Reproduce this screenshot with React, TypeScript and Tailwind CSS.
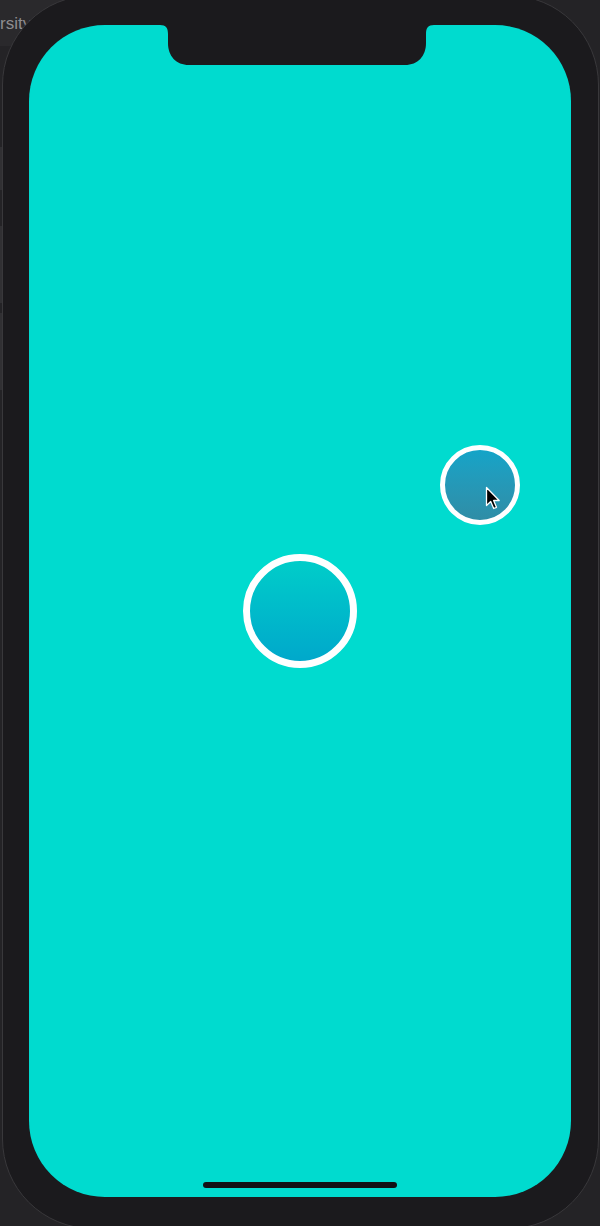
export default function App() {
  return (
    <div className="relative h-[1226px] w-[600px] overflow-hidden bg-[#242326] font-['Liberation_Sans',sans-serif]">
      {/* window behind the device */}
      <div className="absolute left-0 top-0 h-[46px] w-[120px] bg-[#2a292c]">
        <span className="absolute left-0 top-[15px] text-[17px] leading-none text-[#8e8d90]">rsity</span>
      </div>
      <div className="absolute left-0 top-[147px] h-[43px] w-[2px] bg-[#313033]" />
      <div className="absolute left-0 top-[226px] h-[77px] w-[2px] bg-[#313033]" />
      <div className="absolute left-0 top-[313px] h-[77px] w-[2px] bg-[#313033]" />

      {/* device frame */}
      <div className="relative ml-[2px] mr-[1px] -mt-[5px] h-[1234px] rounded-[90px] border border-[#39383b] bg-[#1b1a1d] pl-[26px] pr-[27px] pt-[29px]">
        <div className="relative flex h-[1172px] flex-col items-center justify-end rounded-[76px] bg-[#00dbcf] pb-[9px]">
          {/* notch */}
          <svg
            className="absolute left-[131px] top-0"
            width="274"
            height="40"
            viewBox="0 0 274 40"
          >
            <path
              d="M0 0 H274 C268 0 266 3 266 9 V18 C266 31 258 40 245 40 H29 C16 40 8 31 8 18 V9 C8 3 6 0 0 0 Z"
              fill="#1b1a1d"
            />
          </svg>

          {/* big bubble */}
          <div className="absolute left-[214px] top-[529px] h-[114px] w-[114px] rounded-full border-[7px] border-white bg-gradient-to-b from-[#00cdc9] to-[#00a8cb]" />

          {/* small bubble */}
          <div className="absolute left-[411px] top-[420px] h-[80px] w-[80px] rounded-full border-[5px] border-white bg-gradient-to-b from-[#13a4c8] to-[#2f8da6]" />

          {/* cursor */}
          <svg
            className="absolute left-[456px] top-[461px]"
            width="17"
            height="25"
            viewBox="0 0 17 25"
          >
            <path
              d="M1.5 1.5 V19.5 L5.7 15.5 L8.7 22.5 L11.5 21.3 L8.6 14.5 L14.2 14.5 Z"
              fill="#000"
              stroke="#fff"
              strokeWidth="1.3"
              strokeLinejoin="round"
            />
          </svg>

          {/* home indicator */}
          <div className="h-[6px] w-[194px] rounded-full bg-[#121114]" />
        </div>
      </div>
    </div>
  );
}
